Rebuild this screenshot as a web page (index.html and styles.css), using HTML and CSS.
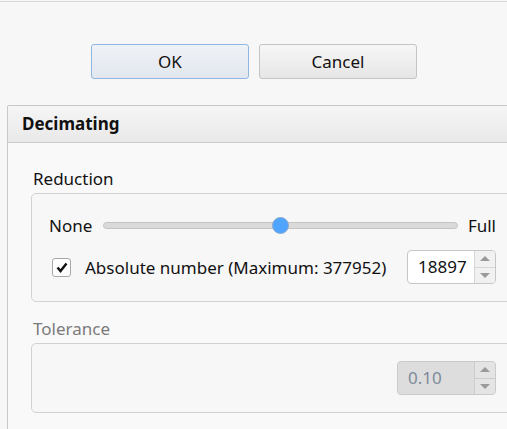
FILE: index.html
```html
<!DOCTYPE html>
<html lang="en">
<head>
    <meta charset="UTF-8">
    <meta name="viewport" content="width=device-width, initial-scale=1.0">
    <title>Decimating</title>
    <link rel="stylesheet" href="styles.css">
</head>
<body>
    <div class="top-line"></div>

    <!-- dialog buttons -->
    <div class="button-row">
        <button class="btn btn-default">OK</button>
        <button class="btn">Cancel</button>
    </div>

    <!-- Decimating group -->
    <div class="group">
        <div class="group-header">Decimating</div>
        <div class="group-body">
            <div class="field-label">Reduction</div>
            <div class="field-box">
                <div class="slider-row">
                    <span class="slider-end slider-min">None</span>
                    <div class="slider-track">
                        <div class="slider-thumb" style="left: 50%"></div>
                    </div>
                    <span class="slider-end slider-max">Full</span>
                </div>
                <div class="check-row">
                    <span class="checkbox">
                        <svg width="12" height="11" viewBox="0 0 12 11">
                            <path d="M1.5 5.5 L4.5 9 L10.5 1.5" fill="none" stroke="#111" stroke-width="2.4"/>
                        </svg>
                    </span>
                    <span class="check-label">Absolute number (Maximum: 377952)</span>
                    <div class="spin spin-abs">
                        <span class="spin-value">18897</span>
                        <span class="spin-arrows">
                            <span class="arrow arrow-up"></span>
                            <span class="arrow arrow-down"></span>
                        </span>
                    </div>
                </div>
            </div>

            <div class="field-label disabled">Tolerance</div>
            <div class="field-box">
                <div class="tol-row">
                    <div class="spin spin-tol disabled">
                        <span class="spin-value">0.10</span>
                        <span class="spin-arrows">
                            <span class="arrow arrow-up"></span>
                            <span class="arrow arrow-down"></span>
                        </span>
                    </div>
                </div>
            </div>
        </div>
    </div>
</body>
</html>
```

FILE: styles.css
```css
/* page */
body {
    margin: 0;
    background-color: #f7f7f7;
    font-family: "Noto Sans", "Open Sans", sans-serif;
    font-size: 17px;
    color: #111;
    overflow: hidden;
    height: 429px;
}

.top-line {
    margin-top: 1px;
    height: 1px;
    background-color: #dadada;
}

/* OK / Cancel */
.button-row {
    display: flex;
    gap: 10px;
    margin-top: 42px;
    padding-left: 91px;
}

.btn {
    width: 158px;
    height: 35px;
    border: 1px solid #c4c4c4;
    border-radius: 3px;
    background: linear-gradient(#f6f6f6, #e6e6e6);
    font-family: inherit;
    font-size: 17px;
    color: #111;
    padding: 0;
}

.btn-default {
    border-color: #8fb7e2;
    background: linear-gradient(#eff2f7, #e2e7ee);
}

/* group box */
.group {
    margin-top: 26px;
    margin-left: 7px;
    width: 512px;
    height: 340px;
    border: 1px solid #c8c8c8;
    border-radius: 2px;
    background-color: #f9f9f9;
}

.group-header {
    height: 36px;
    line-height: 36px;
    padding-left: 14px;
    border-bottom: 1px solid #cacaca;
    background: linear-gradient(#f5f5f5, #e9e9e9);
    font-weight: bold;
}

.group-body {
    padding-left: 23px;
}

.field-label {
    line-height: 20px;
    margin-top: 26px;
    margin-bottom: 4px;
    padding-left: 2px;
}

.field-label.disabled {
    margin-top: 17px;
    color: #7b7b7b;
}

.field-box {
    width: 447px;
    padding: 0 15px 0 17px;
    border: 1px solid #d2d2d2;
    border-radius: 5px;
    background-color: #f7f7f7;
}

/* slider */
.slider-row {
    display: flex;
    align-items: center;
    height: 24px;
    margin-top: 19px;
}

.slider-min {
    width: 54px;
}

.slider-max {
    margin-left: 10px;
}

.slider-track {
    position: relative;
    width: 354px;
    height: 5px;
    border: 1px solid #c3c3c3;
    border-radius: 4px;
    background-color: #dadada;
}

.slider-thumb {
    position: absolute;
    top: -6px;
    width: 15px;
    height: 15px;
    margin-left: -8px;
    border: 1px solid #8aa9cc;
    border-radius: 50%;
    background-color: #4ea4ff;
}

/* checkbox row */
.check-row {
    display: flex;
    align-items: center;
    height: 34px;
    margin-top: 13px;
    margin-bottom: 17px;
}

.checkbox {
    display: flex;
    align-items: center;
    justify-content: center;
    width: 17px;
    height: 17px;
    margin-left: 3px;
    border: 1px solid #a9a9a9;
    border-radius: 3px;
    background-color: #fdfdfd;
}

.check-label {
    margin-left: 14px;
}

/* spin boxes */
.spin {
    display: flex;
    height: 32px;
    border: 1px solid #c6c6c6;
    border-radius: 4px;
    background-color: #fff;
    margin-left: auto;
}

.spin-abs {
    width: 87px;
}

.spin-tol {
    width: 97px;
}

.spin-value {
    flex: 1;
    line-height: 32px;
    padding-left: 10px;
}

.spin-arrows {
    display: flex;
    flex-direction: column;
    width: 20px;
    border-left: 1px solid #d6d6d6;
    border-radius: 0 3px 3px 0;
    background-color: #f1f1f1;
}

.arrow {
    flex: 1;
    display: flex;
    align-items: center;
    justify-content: center;
}

.arrow-up {
    border-bottom: 1px solid #d6d6d6;
}

.arrow-up::after,
.arrow-down::after {
    content: "";
    border-left: 5px solid transparent;
    border-right: 5px solid transparent;
}

.arrow-up::after {
    border-bottom: 5px solid #9a9a9a;
}

.arrow-down::after {
    border-top: 5px solid #9a9a9a;
}

.spin.disabled {
    background-color: #dddddd;
    border-color: #cbcbcb;
    color: #7d8a99;
}

.spin.disabled .spin-arrows {
    background-color: #e4e4e4;
    border-left-color: #cdcdcd;
}

.spin.disabled .arrow-up {
    border-bottom-color: #cdcdcd;
}

.tol-row {
    display: flex;
    height: 34px;
    margin-top: 17px;
    margin-bottom: 17px;
}
```
